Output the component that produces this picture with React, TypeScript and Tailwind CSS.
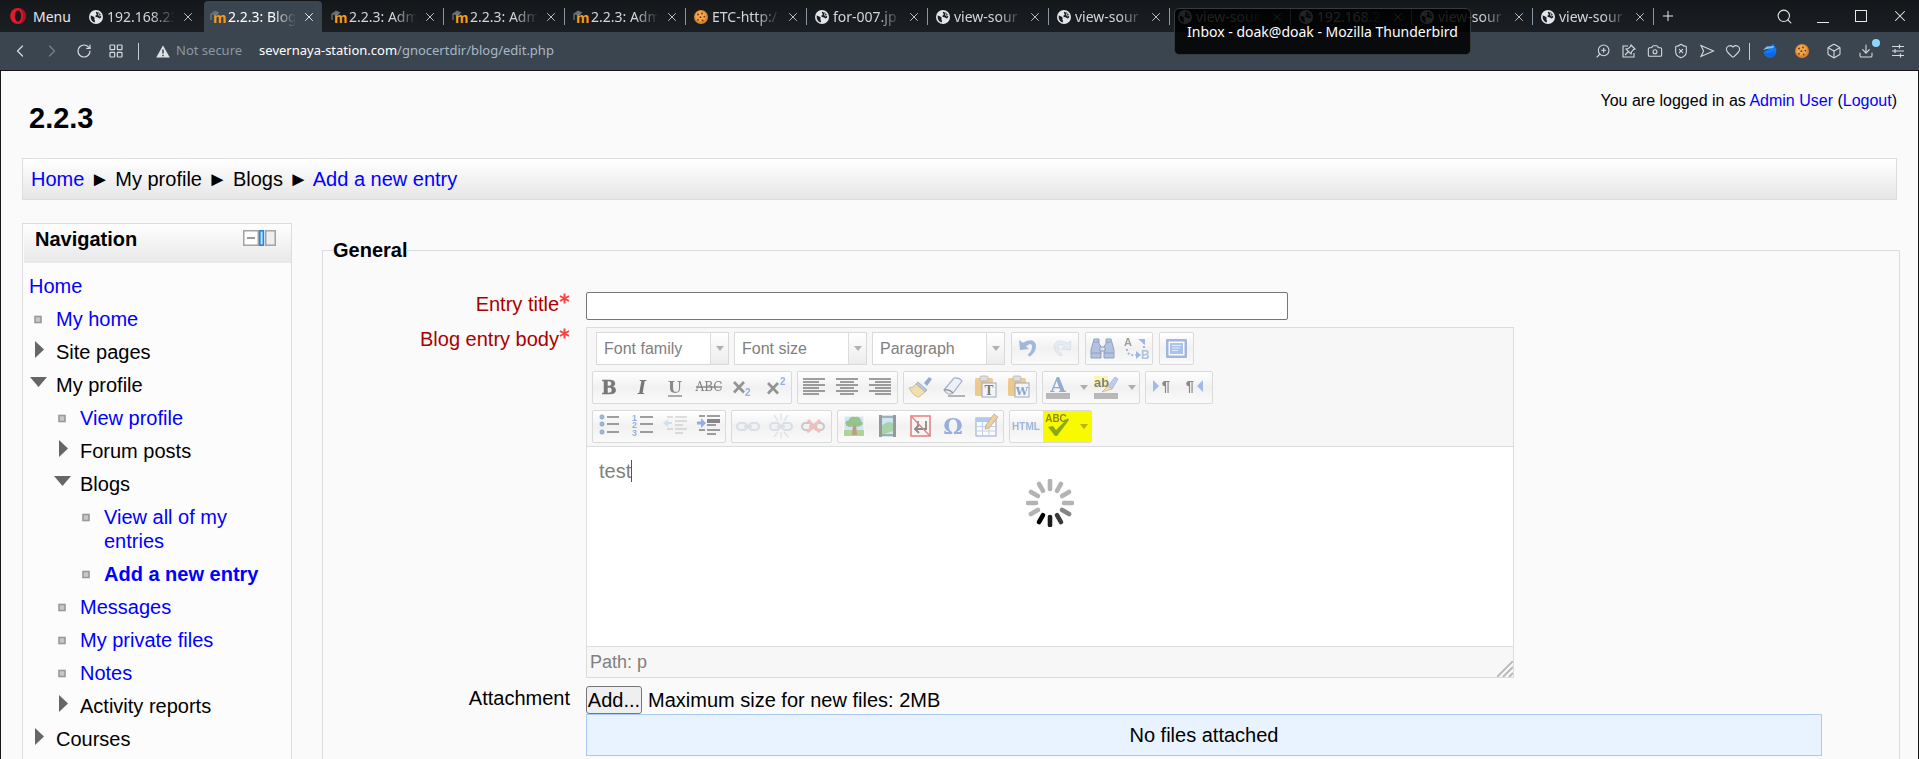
import React from "react";
import { Box, Camera, ChevronLeft, ChevronRight, Download, Heart, LayoutGrid, Plus, RotateCw, Search, ShieldX, X, ZoomIn } from "lucide-react";

/* ---------- browser chrome ---------- */

function GlobeIcon() {
  return (
    <svg width="14" height="14" viewBox="0 0 14 14" aria-hidden="true">
      <circle cx="7" cy="7" r="7" fill="#e4e7e9" />
      <path d="M1.8 5.2C3.2 6.6 4.6 6 5.4 7.2C6.2 8.4 4.8 9 5.8 10.4C6.2 11 6 12 5.6 12.4C3 11.8 1.2 9 1.8 5.2Z" fill="#1b1f23" />
      <path d="M7.2 1.8C6 3.4 8.4 3.6 7.6 4.8C7.2 5.6 6 5.4 6.4 6.4C7 7.6 9 6.6 9.8 8C10.2 8.8 11.2 8.4 12.2 7.2C12.4 4.4 10.4 2 7.2 1.8Z" fill="#1b1f23" />
      <path d="M8.6 2.6L10.4 3.6L9.2 5L11 6.2L12 4.6" fill="none" stroke="#e4e7e9" strokeWidth="0.8" />
    </svg>
  );
}

function MoodleIcon() {
  return (
    <svg width="16" height="14" viewBox="0 0 16 14" aria-hidden="true">
      <text x="3" y="12.5" fontFamily="Liberation Sans, sans-serif" fontWeight="700" fontSize="15" fill="#f49b1b">m</text>
      <path d="M0 4L5 0.6L9.5 2.4L5.4 5.4Z" fill="#6a6f73" />
      <path d="M1 4V10M4 5.4L8 3.6" stroke="#85898c" strokeWidth="1" fill="none" />
    </svg>
  );
}

function CookieIcon() {
  return (
    <svg width="14" height="14" viewBox="0 0 14 14" aria-hidden="true">
      <circle cx="7" cy="7" r="7" fill="#d9862b" />
      <circle cx="6.6" cy="6.2" r="5.4" fill="#f0a54e" />
      <g fill="#6b3410">
        <circle cx="4" cy="4.5" r="0.9" />
        <circle cx="8" cy="3.4" r="0.9" />
        <circle cx="6.4" cy="7.2" r="0.9" />
        <circle cx="10.4" cy="6.6" r="0.9" />
        <circle cx="4" cy="9.8" r="0.9" />
        <circle cx="8.6" cy="10.4" r="0.9" />
      </g>
    </svg>
  );
}

const icons = { globe: GlobeIcon, moodle: MoodleIcon, cookie: CookieIcon };

type TabInfo = { icon: keyof typeof icons; title: string; active?: boolean; divider: boolean };

const tabs: TabInfo[] = [
  { icon: "globe", title: "192.168.23", divider: false },
  { icon: "moodle", title: "2.2.3: Blogs", active: true, divider: false },
  { icon: "moodle", title: "2.2.3: Adm", divider: true },
  { icon: "moodle", title: "2.2.3: Adm", divider: true },
  { icon: "moodle", title: "2.2.3: Adm", divider: true },
  { icon: "cookie", title: "ETC-http:/", divider: true },
  { icon: "globe", title: "for-007.jp", divider: true },
  { icon: "globe", title: "view-sour", divider: true },
  { icon: "globe", title: "view-sour", divider: true },
  { icon: "globe", title: "view-sour", divider: true },
  { icon: "globe", title: "192.168.23", divider: true },
  { icon: "globe", title: "view-sour", divider: true },
  { icon: "globe", title: "view-sour", divider: true },
];

function Tab({ icon, title, active, divider }: TabInfo) {
  const Icon = icons[icon];
  return (
    <div className="flex w-[121px] flex-none items-center">
      <div className={"mt-px flex h-[31px] w-[118px] items-center rounded-t-sm pl-1.5 " + (active ? "bg-[#3b4550] text-white" : "text-[#d3d6d9]")}>
        <span className="flex w-[18px] flex-none"><Icon /></span>
        <span className="w-[68px] flex-none overflow-hidden whitespace-nowrap text-[14px] leading-5 [mask-image:linear-gradient(to_right,black_65%,transparent)]">{title}</span>
        <button aria-label="Close tab" className="ml-1.5"><X size={14} strokeWidth={1.5} /></button>
      </div>
      {divider && <span className="h-[17px] w-px bg-[#8996a3]" />}
    </div>
  );
}

function TabStrip() {
  return (
    <div className="flex h-8 flex-none items-stretch bg-gradient-to-b from-[#14171a] to-[#1b1f23]">
      <button className="flex w-[83px] flex-none items-center gap-[7px] pl-2.5 text-[14px] text-[#e6e8ea]">
        <svg width="16" height="16" viewBox="0 0 16 16" aria-hidden="true">
          <ellipse cx="8" cy="8" rx="7.8" ry="8" fill="#e8182d" />
          <path d="M8 0A8 8 0 0 1 8 16Q13 14 13 8Q13 2 8 0Z" fill="#a80f20" />
          <ellipse cx="8" cy="8" rx="3.2" ry="5.8" fill="#16191c" />
        </svg>
        Menu
      </button>
      {tabs.map((t, i) => <Tab key={i} {...t} />)}
      <button aria-label="New tab" className="ml-1 text-[#e6e8ea]"><Plus size={16} strokeWidth={1.5} /></button>
      <div className="ml-auto flex flex-none items-center gap-6 pr-2.5 text-[#e6e8ea]">
        <button aria-label="Search tabs"><Search size={17} strokeWidth={1.5} /></button>
        <button aria-label="Minimize" className="mt-0.5 h-3 w-3 border-b border-current" />
        <button aria-label="Maximize" className="ml-0.5 h-3 w-3 border border-current" />
        <button aria-label="Close window"><X size={18} strokeWidth={1.4} /></button>
      </div>
    </div>
  );
}

function AddressBar() {
  return (
    <div className="flex h-[39px] flex-none items-center border-b border-[#14161a] bg-[#3b4550] text-[13px] text-[#d5dade]">
      <button aria-label="Back" className="ml-2.5"><ChevronLeft size={20} strokeWidth={1.5} /></button>
      <button aria-label="Forward" className="ml-3 text-[#75808a]"><ChevronRight size={20} strokeWidth={1.5} /></button>
      <button aria-label="Reload" className="ml-[14px]"><RotateCw size={16} strokeWidth={1.8} /></button>
      <button aria-label="Speed dial" className="ml-4"><LayoutGrid size={16} strokeWidth={1.8} /></button>
      <span className="ml-[14px] h-[17px] w-px bg-[#c3cad0]" />
      <svg className="ml-[17px]" width="14" height="13" viewBox="0 0 14 13" aria-hidden="true">
        <path d="M7 0.5L13.8 12.5H0.2Z" fill="#dfe3e6" />
        <path d="M7 4.6V8.6M7 9.8V11.2" stroke="#3b4550" strokeWidth="1.5" />
      </svg>
      <span className="ml-1.5 text-[#8d979f]">Not secure</span>
      <span className="ml-[17px] text-[#a9b8c4]"><span className="text-white">severnaya-station.com</span>/gnocertdir/blog/edit.php</span>
      <div className="ml-auto flex items-center gap-2.5">
        <button aria-label="Zoom"><ZoomIn size={16} strokeWidth={1.6} className="-scale-x-100" /></button>
        <button aria-label="Pinboards">
          <svg width="16" height="16" viewBox="0 0 16 16" fill="none" stroke="currentColor" strokeWidth="1.1">
            <path d="M7 3H2V14H13V10M10 2L14 6L12.5 6.4L10.5 9L10 11L5 6L7.2 5.6L9.6 3.5ZM7.5 8.5L4 12" />
          </svg>
        </button>
        <button aria-label="Snapshot"><Camera size={16} strokeWidth={1.6} /></button>
        <button aria-label="Ad blocker"><ShieldX size={16} strokeWidth={1.6} /></button>
        <button aria-label="My Flow">
          <svg width="16" height="16" viewBox="0 0 16 16" fill="none" stroke="currentColor" strokeWidth="1.1">
            <path d="M2 2.5L14.5 8L2 13.5L4.6 8Z" />
          </svg>
        </button>
        <button aria-label="Bookmark"><Heart size={16} strokeWidth={1.6} /></button>
      </div>
      <span className="mx-2 h-[17px] w-px bg-[#c3cad0]" />
      <div className="flex items-center gap-4 pl-1 pr-[13px]">
        <button aria-label="Sync extension">
          <svg width="16" height="16" viewBox="0 0 16 16" aria-hidden="true">
            <path d="M1.6 9A6.4 6.4 0 0 0 14 10L14.4 6L11.8 1.6L9.6 1L10 4.4Z" fill="#0f7bf5" />
            <path d="M1 7L4.6 3.4L12 3L11 5L5 6Z" fill="#7cc0ff" />
            <path d="M2 9Q6 12 12 8L13.6 11A6.4 6.4 0 0 1 2 9Z" fill="#1464e0" />
          </svg>
        </button>
        <button aria-label="Cookie editor" className="flex w-4 justify-center"><CookieIcon /></button>
        <button aria-label="Extensions"><Box size={16} strokeWidth={1.6} /></button>
        <button aria-label="Downloads" className="relative">
          <Download size={16} strokeWidth={1.6} />
          <span className="absolute -right-1.5 -top-1 h-2 w-2 rounded-full bg-[#8bd8ff]" />
        </button>
        <button aria-label="Easy setup">
          <svg width="16" height="16" viewBox="0 0 16 16" fill="none" stroke="currentColor" strokeWidth="1.2">
            <path d="M2 3.5H14M2 8H14M2 12.5H14M9.5 1.5V5.5M5 6V10M10.5 10.5V14.5" />
          </svg>
        </button>
      </div>
    </div>
  );
}

/* ---------- editor toolbar ---------- */

const SERIF = "DejaVu Serif, Liberation Serif, serif";
const SANS = "Liberation Sans, Arial, sans-serif";

function Lines({ rows, color = "#2b2b2b" }: { rows: [number, number, number][]; color?: string }) {
  return <>{rows.map(([x1, x2, y]) => <path key={x1 + "-" + y} d={`M${x1} ${y}H${x2}`} stroke={color} strokeWidth="1.6" />)}</>;
}

const clipboard = (
  <>
    <rect x="5" y="6" width="18" height="18" rx="1.5" fill="#e5a93a" />
    <rect x="10" y="4" width="8" height="5" rx="1.5" fill="#c9c9c9" stroke="#777" strokeWidth="0.8" />
    <rect x="12" y="11" width="14" height="14" fill="#f2f5fb" stroke="#5b6a86" />
  </>
);

const chain = (x: number, c: string) => (
  <g fill="none" stroke={c} strokeWidth="2">
    <rect x={x} y="12" width="10" height="7" rx="3.5" />
    <rect x={x + 12} y="12" width="10" height="7" rx="3.5" />
    <path d={`M${x + 7} 15.5H${x + 15}`} />
  </g>
);

const drawings: Record<string, React.ReactNode> = {
  Undo: <path d="M7 7L8 17L17 16L14 13.4Q19 8.6 20 13Q20.6 17.6 15.4 22L18 23.4Q24.6 18.6 24 12Q21.6 4 11 9.8Z" fill="#5f86c9" />,
  Redo: <path d="M26 8L25 17L16.6 16L19.4 13.4Q14 9.6 13 13Q12.6 17.6 17.4 22L15 23Q9 18.6 9.4 12Q12 4.6 22 10Z" fill="#dde4ef" stroke="#b9c5d9" strokeWidth="0.7" />,
  Find: (
    <g fill="#7d9bcf" stroke="#3f5d95" strokeWidth="1">
      <path d="M8 6H13V11L15 13V25H5V17ZM20 6H25L28 17V25H18V13L20 11Z" />
      <path d="M14 14H19V18H14ZM5 20H15M18 20H28M8 9H13M20 9H25" fill="#c9d6ee" />
    </g>
  ),
  "Find and replace": (
    <>
      <text x="5" y="13" fontFamily={SANS} fontSize="11" fontWeight="700" fill="#555">A</text>
      <text x="22" y="26" fontFamily={SANS} fontSize="12" fontWeight="700" fill="#7795d0">B</text>
      <path d="M8 16Q8 23 17 22M25 15V8" fill="none" stroke="#5b84d8" strokeWidth="2" strokeDasharray="2 2" />
      <path d="M17 18L22 22L17 26ZM19 6H26V12" fill="#5b84d8" />
    </>
  ),
  "Toggle fullscreen": (
    <>
      <rect x="6" y="6" width="21" height="19" rx="1" fill="#5e84c8" />
      <rect x="8.5" y="8.5" width="16" height="14" fill="#fff" />
      <rect x="10" y="10" width="13" height="11" fill="#6f9be6" />
      <path d="M12 12.5H21M12 15H20M12 17.5H18" stroke="#dce8fb" strokeWidth="1" />
    </>
  ),
  Bold: <text x="16" y="22" textAnchor="middle" fontFamily={SERIF} fontSize="18" fontWeight="700" fill="#111" stroke="#111" strokeWidth="0.5">B</text>,
  Italic: <text x="16" y="22" textAnchor="middle" fontFamily={SERIF} fontSize="18" fontWeight="700" fontStyle="italic" fill="#111">I</text>,
  Underline: (
    <>
      <text x="16" y="21" textAnchor="middle" fontFamily={SERIF} fontSize="16" fontWeight="700" fill="#333">U</text>
      <path d="M9 24H23" stroke="#333" strokeWidth="1.4" />
    </>
  ),
  Strikethrough: (
    <>
      <text x="17" y="19" textAnchor="middle" fontFamily={SERIF} fontSize="12" fill="#222">ABC</text>
      <path d="M4 15H30" stroke="#222" strokeWidth="1.3" />
    </>
  ),
  Subscript: (
    <>
      <path d="M9 10L19 20.5M19 10L9 20.5" stroke="#444" strokeWidth="2.6" />
      <text x="20" y="24" fontFamily={SANS} fontSize="10" fontWeight="700" fill="#4774d6">2</text>
    </>
  ),
  Superscript: (
    <>
      <path d="M10 11L20 21.5M20 11L10 21.5" stroke="#444" strokeWidth="2.6" />
      <text x="22" y="13" fontFamily={SANS} fontSize="10" fontWeight="700" fill="#4774d6">2</text>
    </>
  ),
  "Align left": <Lines rows={[[5, 27, 7], [5, 21, 10], [5, 27, 13], [5, 21, 16], [5, 27, 19], [5, 21, 22]]} />,
  "Align center": <Lines rows={[[5, 27, 7], [9, 23, 10], [5, 27, 13], [9, 23, 16], [5, 27, 19], [9, 23, 22]]} />,
  "Align right": <Lines rows={[[5, 27, 7], [11, 27, 10], [5, 27, 13], [11, 27, 16], [5, 27, 19], [11, 27, 22]]} />,
  "Cleanup messy code": (
    <>
      <path d="M20 11L25 5L28 7L23 14Z" fill="#4a6bb0" />
      <path d="M14 10L23 18L21 20L12 12Z" fill="#8fa3c8" stroke="#4c5f86" strokeWidth="0.8" />
      <path d="M12 12L21 20L15 25Q10 25 5 16Q10 16 12 12Z" fill="#f0cf7a" stroke="#a98637" strokeWidth="0.9" />
    </>
  ),
  "Remove formatting": (
    <>
      <path d="M7 18L17 6Q22 5 25 9L16 21Q11 24 7 18Z" fill="#e9eefb" stroke="#5877ba" strokeWidth="1.2" />
      <path d="M7 18Q12 17 16 21M11 24H28" fill="none" stroke="#555" strokeWidth="1.4" />
    </>
  ),
  "Paste as plain text": <>{clipboard}<text x="19" y="23" textAnchor="middle" fontFamily={SERIF} fontSize="12" fontWeight="700" fill="#222">T</text></>,
  "Paste from Word": <>{clipboard}<text x="19" y="23" textAnchor="middle" fontFamily={SERIF} fontSize="11" fontWeight="700" fill="#3565bd">W</text></>,
  "Text color": (
    <>
      <text x="15" y="20" textAnchor="middle" fontFamily={SERIF} fontSize="20" fontWeight="700" fill="#4a70b8">A</text>
      <rect x="3" y="21" width="24" height="6" fill="#888" />
    </>
  ),
  "Background color": (
    <>
      <rect x="3" y="4" width="14" height="12" fill="#fbf27a" />
      <text x="3" y="15" fontFamily={SANS} fontSize="13" fontWeight="700" fill="#222">ab</text>
      <path d="M17 14L24 5L27 7L21 17Z" fill="#8fb0ea" stroke="#5877ba" strokeWidth="0.8" />
      <path d="M17 14L21 17L11 20Z" fill="#f0cf7a" stroke="#a98637" strokeWidth="0.8" />
      <rect x="3" y="21" width="24" height="6" fill="#888" />
    </>
  ),
  "Direction left to right": (
    <>
      <path d="M7 8L13 14L7 20Z" fill="#5f8fdc" />
      <text x="20" y="19" textAnchor="middle" fontFamily={SANS} fontSize="15" fontWeight="700" fill="#333">¶</text>
    </>
  ),
  "Direction right to left": (
    <>
      <path d="M24 8L18 14L24 20Z" fill="#5f8fdc" />
      <text x="11" y="19" textAnchor="middle" fontFamily={SANS} fontSize="15" fontWeight="700" fill="#333">¶</text>
    </>
  ),
  "Bulleted list": (
    <>
      {[6, 13, 21].map((y) => <circle key={y} cx="9" cy={y} r="2.2" fill="#5b84c8" stroke="#35568f" strokeWidth="0.6" />)}
      <Lines rows={[[14, 26, 6], [14, 26, 13], [14, 26, 21]]} />
    </>
  ),
  "Numbered list": (
    <>
      {[1, 2, 3].map((n) => <text key={n} x="6" y={2 + n * 7.5} fontFamily={SANS} fontSize="9" fontWeight="700" fill="#4774d6">{n}</text>)}
      <Lines rows={[[14, 27, 6], [14, 27, 13], [14, 27, 21]]} />
    </>
  ),
  Outdent: (
    <>
      <Lines color="#b8b8b8" rows={[[8, 14, 6], [16, 28, 6], [16, 28, 10], [16, 24, 14], [8, 14, 18], [16, 28, 18], [16, 24, 22]]} />
      <path d="M4 12L9 8V11H13V13H9V16Z" fill="#b7cdf2" />
    </>
  ),
  Indent: (
    <>
      <Lines rows={[[7, 13, 5], [15, 28, 5], [15, 28, 9], [15, 24, 14], [7, 13, 19], [15, 28, 19], [15, 24, 23]]} />
      <path d="M15 8H28V12H15Z" fill="#2b2b2b" />
      <path d="M14 12L9 7V10.5H5V13.5H9V17Z" fill="#4774d6" />
    </>
  ),
  "Insert link": chain(5, "#c5cddb"),
  Unlink: (
    <>
      {chain(5, "#c5cddb")}
      <path d="M16 2V9M16 21V27M9 4L13 10M23 4L19 10M9 26L13 21M23 26L19 21" stroke="#ccd3df" strokeWidth="1.4" />
    </>
  ),
  "Prevent automatic linking": (
    <>
      {chain(4, "#a5a5a5")}
      <path d="M10 9Q14 14 22 21M22 9Q18 14 9 21" stroke="#f09494" strokeWidth="3.2" fill="none" />
    </>
  ),
  "Insert image": (
    <>
      <rect x="6" y="5" width="20" height="20" fill="#b9d6fa" stroke="#fff" />
      <path d="M6 19H26V25H6Z" fill="#77b74c" />
      <path d="M15 13H18L19 24H14Z" fill="#8a5a2b" />
      <path d="M8 14Q6 10 11 9Q12 5 17 6Q22 5 23 10Q27 13 22 15Q18 17 16 14Q12 18 8 14Z" fill="#4f9a35" />
    </>
  ),
  "Insert media": (
    <>
      <rect x="8" y="4" width="17" height="22" fill="#a9d9f5" />
      <path d="M11 15Q16 9 22 12V20L11 24Z" fill="#6cb873" />
      <path d="M9.5 4V26M23.5 4V26" stroke="#4a5148" strokeWidth="3" />
      <path d="M11 6H22M11 24H22" stroke="#4a5148" strokeWidth="1.4" />
    </>
  ),
  "Insert non-breaking space": (
    <>
      <rect x="7" y="5" width="19" height="20" fill="#f6f6f6" stroke="#d22c2c" strokeWidth="1.6" />
      <path d="M22 10V18H12M15 14L11 18L15 22M14 10V16" stroke="#333" strokeWidth="1.8" fill="none" />
      <path d="M7 5L26 25" stroke="#d22c2c" strokeWidth="1.4" />
    </>
  ),
  "Insert custom character": <text x="16" y="23" textAnchor="middle" fontFamily={SERIF} fontSize="22" fontWeight="700" fill="#4a78cc">Ω</text>,
  "Insert table": (
    <>
      <rect x="6" y="7" width="20" height="18" fill="#fff" stroke="#4468a8" />
      <path d="M6 7H26V11H6Z" fill="#7fa3de" />
      <path d="M6 15.5H26M6 20H26M12.5 11V25M19 11V25" stroke="#9bb4de" />
      <path d="M24 3L28 6L19 17L15 18L16 14Z" fill="#e4b45a" stroke="#8f6b2c" strokeWidth="0.8" />
    </>
  ),
  "Edit HTML source": <text x="16" y="19" textAnchor="middle" fontFamily={SANS} fontSize="10" fontWeight="700" fill="#5d83c4">HTML</text>,
  "Toggle spellchecker": (
    <>
      <text x="13" y="11" textAnchor="middle" fontFamily={SANS} fontSize="10" fontWeight="700" fill="#333">ABC</text>
      <path d="M5 16L10 15L13 19L25 7L26 9L14 25H12Z" fill="#2f6b22" />
    </>
  ),
};

function DownArrow() {
  return (
    <svg width="8" height="5" viewBox="0 0 8 5" aria-hidden="true">
      <path d="M0 0H8L4 5Z" fill="#000" fillOpacity="0.28" />
    </svg>
  );
}

function ToolGroup({ items, highlight }: { items: string[]; highlight?: string }) {
  const hasMenu = ["Text color", "Background color", "Toggle spellchecker"];
  return (
    <div className="flex h-[33px] rounded-xs border border-[#dadada] bg-gradient-to-b from-white via-[#f1f1f1] to-[#fafafa]">
      {items.map((name) => (
        <div key={name} className={"flex " + (name === highlight ? "bg-[#f9f900]" : "")}>
          <button aria-label={name} title={name}>
            <svg className="opacity-55" width="33" height="31" viewBox="0 0 33 31">{drawings[name]}</svg>
          </button>
          {hasMenu.includes(name) && (
            <button aria-label={name + " options"} className="flex w-[15px] items-center justify-center"><DownArrow /></button>
          )}
        </div>
      ))}
    </div>
  );
}

function ToolSelect({ label }: { label: string }) {
  return (
    <label className="grid h-[33px] w-[133px] grid-cols-[113px_1fr] border border-[#d9d9d9] bg-white">
      <select aria-label={label} className="col-span-2 col-start-1 row-start-1 appearance-none pl-[7px] text-[16px] text-[#808080]">
        <option>{label}</option>
      </select>
      <span className="pointer-events-none col-start-2 row-start-1 flex items-center justify-center border-l border-[#dcdcdc] bg-gradient-to-b from-white to-[#ececec]">
        <DownArrow />
      </span>
    </label>
  );
}

function Spinner() {
  const shades = ["#b3b3b3", "#b3b3b3", "#b3b3b3", "#b3b3b3", "#858585", "#3a3a3a", "#1c1c1c", "#000000", "#b3b3b3", "#b3b3b3", "#b3b3b3", "#b3b3b3"];
  return (
    <svg width="48" height="48" viewBox="0 0 48 48" role="img" aria-label="Loading">
      {shades.map((c, i) => (
        <path key={i} d="M24 2V10" stroke={c} strokeWidth="4.6" strokeLinecap="round" transform={`rotate(${i * 30} 24 24)`} />
      ))}
    </svg>
  );
}

function Editor() {
  return (
    <div className="w-[928px] max-w-full border border-[#dcdcdc] bg-[#f7f7f7] text-[#808080]">
      <div className="flex flex-col gap-1.5 pb-[3px] pl-[5px] pt-1">
        <div className="flex gap-1.5 pl-1">
          <div className="flex gap-[5px]">
            <ToolSelect label="Font family" />
            <ToolSelect label="Font size" />
            <ToolSelect label="Paragraph" />
          </div>
          <ToolGroup items={["Undo", "Redo"]} />
          <ToolGroup items={["Find", "Find and replace"]} />
          <ToolGroup items={["Toggle fullscreen"]} />
        </div>
        <div className="flex gap-[5px]">
          <ToolGroup items={["Bold", "Italic", "Underline", "Strikethrough", "Subscript", "Superscript"]} />
          <ToolGroup items={["Align left", "Align center", "Align right"]} />
          <ToolGroup items={["Cleanup messy code", "Remove formatting", "Paste as plain text", "Paste from Word"]} />
          <ToolGroup items={["Text color", "Background color"]} />
          <ToolGroup items={["Direction left to right", "Direction right to left"]} />
        </div>
        <div className="flex gap-[5px]">
          <ToolGroup items={["Bulleted list", "Numbered list", "Outdent", "Indent"]} />
          <ToolGroup items={["Insert link", "Unlink", "Prevent automatic linking"]} />
          <ToolGroup items={["Insert image", "Insert media", "Insert non-breaking space", "Insert custom character", "Insert table"]} />
          <ToolGroup items={["Edit HTML source", "Toggle spellchecker"]} highlight="Toggle spellchecker" />
        </div>
      </div>
      <div className="relative h-[201px] border-y border-[#dcdcdc] bg-white px-3 py-3">
        <div role="textbox" aria-label="Blog entry body" className="flex items-center leading-6">
          test<span className="h-[22px] w-px bg-[#555]" />
        </div>
        <div className="absolute inset-x-0 top-8 flex justify-center"><Spinner /></div>
      </div>
      <div className="flex h-[30px] items-end justify-between pl-[3px]">
        <span className="self-center text-[18px] leading-6">Path: p</span>
        <svg width="16" height="16" viewBox="0 0 16 16" aria-hidden="true">
          <path d="M0 16L16 0M6 16L16 6M12 16L16 12" stroke="#b5b5b5" strokeWidth="1.8" />
        </svg>
      </div>
    </div>
  );
}

/* ---------- page ---------- */

const link = "text-[#0000ff]";

type NavItem = { text: string; marker?: "leaf" | "closed" | "open"; depth: number; href?: boolean; current?: boolean };

const navItems: NavItem[] = [
  { text: "Home", depth: 0, href: true },
  { text: "My home", depth: 1, marker: "leaf", href: true },
  { text: "Site pages", depth: 1, marker: "closed" },
  { text: "My profile", depth: 1, marker: "open" },
  { text: "View profile", depth: 2, marker: "leaf", href: true },
  { text: "Forum posts", depth: 2, marker: "closed" },
  { text: "Blogs", depth: 2, marker: "open" },
  { text: "View all of my entries", depth: 3, marker: "leaf", href: true },
  { text: "Add a new entry", depth: 3, marker: "leaf", href: true, current: true },
  { text: "Messages", depth: 2, marker: "leaf", href: true },
  { text: "My private files", depth: 2, marker: "leaf", href: true },
  { text: "Notes", depth: 2, marker: "leaf", href: true },
  { text: "Activity reports", depth: 2, marker: "closed" },
  { text: "Courses", depth: 1, marker: "closed" },
];

const indent = ["pl-1.5", "pl-1.5", "pl-[30px]", "pl-[54px]"];

function Marker({ kind }: { kind: "leaf" | "closed" | "open" }) {
  return (
    <svg className="w-[27px] flex-none" width="27" height="24" viewBox="0 0 27 24" aria-hidden="true">
      {kind === "leaf" && <rect x="6" y="9.5" width="6" height="6" fill="#c8c8c8" stroke="#999" strokeWidth="1.6" />}
      {kind === "closed" && <path d="M6 1L15 9.5L6 18Z" fill="#666" />}
      {kind === "open" && <path d="M1 4H18L9.5 14Z" fill="#666" />}
    </svg>
  );
}

function Navigation() {
  return (
    <aside className="w-[270px] flex-none border border-[#dddddd] bg-[#fcfcfc] pb-10">
      <div className="ml-px mt-0.5 flex h-[37px] items-start justify-between bg-gradient-to-b from-[#fdfdfd] to-[#e8e8e8] pl-[11px] pr-[15px] pt-px">
        <h2 className="font-bold leading-6">Navigation</h2>
        <button aria-label="Hide or dock Navigation block" className="mt-[3px]">
          <svg width="33" height="16" viewBox="0 0 33 16">
            <rect x="0.75" y="0.75" width="14.5" height="14.5" fill="#fff" stroke="#a3a3a3" strokeWidth="1.5" />
            <path d="M4 8H12" stroke="#777" strokeWidth="1.5" />
            <rect x="16.8" y="0.8" width="3.6" height="14.4" fill="#bfe2ff" stroke="#2288e6" strokeWidth="1.6" />
            <rect x="22.75" y="0.75" width="9.5" height="14.5" fill="#eee" stroke="#a3a3a3" strokeWidth="1.5" />
          </svg>
        </button>
      </div>
      <ul className="flex flex-col gap-[9px] pr-8 pt-[11px]">
        {navItems.map((n) => (
          <li key={n.text} className={"flex items-start " + indent[n.depth]}>
            {n.marker && <Marker kind={n.marker} />}
            {n.href ? <a href="#" className={link + (n.current ? " -mr-8 font-bold" : "")}>{n.text}</a> : <span>{n.text}</span>}
          </li>
        ))}
      </ul>
    </aside>
  );
}

function FormRow({ label, id, required, children }: { label: string; id: string; required?: boolean; children: React.ReactNode }) {
  return (
    <div className="flex items-start gap-4">
      <label htmlFor={id} className={"flex w-[237px] flex-none items-start justify-end " + (required ? "text-[#aa0000]" : "")}>
        {label}
        {required && (
          <svg className="mt-px" width="11" height="11" viewBox="0 0 11 11" role="img" aria-label="Required">
            <path d="M5.5 0.5V10.5M1 3L10 8M10 3L1 8" stroke="#ff4040" strokeWidth="2" />
          </svg>
        )}
      </label>
      <div className="min-w-0 flex-1">{children}</div>
    </div>
  );
}

export default function App() {
  return (
    <div className="flex h-screen flex-col overflow-hidden bg-[#fafafa] font-['Noto_Sans',sans-serif]">
      <TabStrip />
      <AddressBar />
      <div role="tooltip" className="absolute left-[1174px] top-2 h-[47px] rounded-[5px] border border-[#353b40] bg-black/85 px-3 pt-[13px] text-[14px] leading-5 text-white">
        Inbox - doak@doak - Mozilla Thunderbird
      </div>

      <div className="flex-1 border-x border-[#16181c] font-['Liberation_Sans',Arial,sans-serif] text-[20px] leading-6 text-black">
        <header className="flex h-[87px] justify-between px-[21px]">
          <h1 className="pl-[7px] pt-[29px] text-[29px] font-bold leading-9">2.2.3</h1>
          <p className="pt-[18px] text-[16px]">
            You are logged in as <a href="#" className={link}>Admin User</a> (<a href="#" className={link}>Logout</a>)
          </p>
        </header>

        <nav aria-label="Breadcrumb" className="mx-[21px] border border-[#dddddd] bg-gradient-to-b from-white to-[#e6e6e6] px-2 py-2">
          <a href="#" className={link}>Home</a> ► <span>My profile</span> ► <span>Blogs</span> ► <a href="#" className={link}>Add a new entry</a>
        </nav>

        <main className="mt-[23px] flex items-start gap-[30px] pl-[21px] pr-[18px]">
          <Navigation />
          <fieldset className="mt-[15px] min-w-0 flex-1 border border-[#dddddd] px-2.5 pb-10">
            <legend className="font-bold">General</legend>
            <div className="flex flex-col gap-2 pt-[30px]">
              <FormRow label="Entry title" id="title" required>
                <input id="title" type="text" className="-mb-px block h-7 w-[702px] max-w-full rounded-xs border border-[#767676] bg-white px-1" />
              </FormRow>
              <FormRow label="Blog entry body" id="body" required>
                <Editor />
              </FormRow>
              <FormRow label="Attachment" id="attachment">
                <div className="flex items-center gap-1.5">
                  <button id="attachment" className="h-7 w-14 rounded-[3px] border border-[#767676] bg-[#efefef]">Add...</button>
                  <span>Maximum size for new files: 2MB</span>
                </div>
                <div className="mr-[67px] flex h-[42px] items-center justify-center border border-[#a9cbee] bg-[#e8f3ff]">No files attached</div>
              </FormRow>
            </div>
          </fieldset>
        </main>
      </div>
    </div>
  );
}
